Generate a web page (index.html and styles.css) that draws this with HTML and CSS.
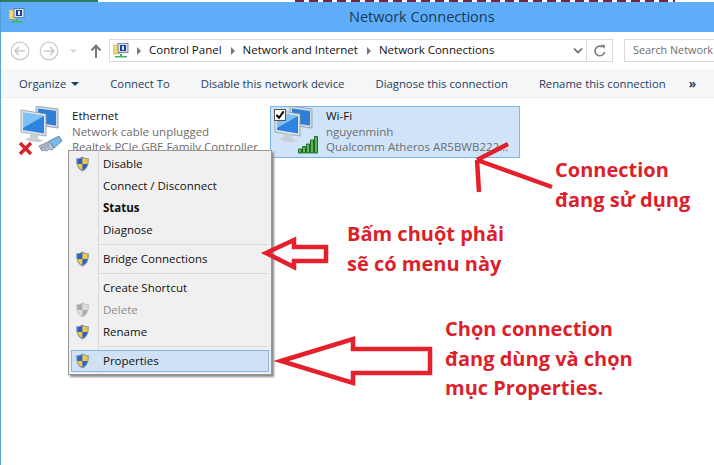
FILE: index.html
```html
<!DOCTYPE html>
<html lang="en">
<head>
    <meta charset="UTF-8">
    <title>Network Connections</title>
    <link rel="stylesheet" href="styles.css">
</head>
<body>
<svg class="defs" width="0" height="0">
    <symbol id="folderNet" viewBox="0 0 16 16">
        <path d="M0 2h6l1 1v8H0z" fill="#f3d774" stroke="#c9a94a" stroke-width=".6"/>
        <rect x="5" y="0.5" width="10" height="9" fill="#d8e4f2" stroke="#5c6f8c" stroke-width=".8"/>
        <rect x="7" y="2" width="6" height="6" fill="#1d3f9e"/>
        <rect x="9" y="3" width="2" height="4" fill="#e8eef8"/>
        <path d="M7 11h2v2h5v1.500H2V13h5z" fill="#3fb56a"/>
    </symbol>
    <symbol id="computers" viewBox="0 3 48 44">
        <path d="M18 3l22 3v19l-22-3z" fill="#cfd9e3" stroke="#8b98a6" stroke-width=".8"/>
        <path d="M20 5.500l18 2.500v14.500L20 20z" fill="#2f7fd6"/>
        <path d="M3 7l25 4v22L3 29z" fill="#dfe6ec" stroke="#8b98a6" stroke-width=".8"/>
        <path d="M5 9.500l21 3.500v17.500L5 27z" fill="#2c83e0"/>
        <path d="M5 9.500l21 3.500-21 12z" fill="#7fc0f5"/>
        <path d="M12 30l8 1.500v4l6 2.500c-6 2-14 1-19-2l5-1.500z" fill="#c9ced3"/>
    </symbol>
    <symbol id="shield" viewBox="0 0 16 18">
        <path d="M8 .5c2 1.500 4.500 2 7 2 .5 6.500-1 12-7 15-6-3-7.500-8.500-7-15 2.500 0 5-.5 7-2z" fill="#7d94ad"/>
        <path d="M8 2v7H2.400c-.2-2 0-3.500 0-5.500C4.500 3.500 6.500 3 8 2z" fill="#2f62c4"/>
        <path d="M8 2c1.500 1 3.500 1.500 5.600 1.500 0 2 .2 3.500 0 5.500H8z" fill="#f3c93a"/>
        <path d="M2.400 9H8v7C4.500 14.200 3 12 2.400 9z" fill="#f3c93a"/>
        <path d="M8 9h5.600C13 12 11.500 14.200 8 16z" fill="#2f62c4"/>
    </symbol>
    <symbol id="shieldOff" viewBox="0 0 16 18">
        <path d="M8 .5c2 1.500 4.500 2 7 2 .5 6.500-1 12-7 15-6-3-7.500-8.500-7-15 2.500 0 5-.5 7-2z" fill="#c4c4c4"/>
        <path d="M8 2v7H2.400c-.2-2 0-3.500 0-5.500C4.500 3.500 6.500 3 8 2zM8 9h5.600C13 12 11.500 14.200 8 16z" fill="#a9a9a9"/>
        <path d="M8 2c1.500 1 3.500 1.500 5.600 1.500 0 2 .2 3.500 0 5.500H8zM2.400 9H8v7C4.500 14.200 3 12 2.400 9z" fill="#dedede"/>
    </symbol>
</svg>

<div class="topStrip"><span class="stripGreen"></span><span class="stripRed"></span></div>
<div class="window">
    <div class="titleBar">
        <svg class="titleIcon" width="16" height="16"><use href="#folderNet"/></svg>
        <div class="titleText">Network Connections</div>
    </div>

    <div class="navRow">
        <svg class="navIcons" width="101" height="22" viewBox="0 0 101 22">
            <g fill="none" stroke="#c9c9c9" stroke-width="1.200">
                <circle cx="20" cy="11" r="8.800"/>
                <circle cx="49" cy="11" r="8.800"/>
                <path d="M25 11H15M19 7l-4 4 4 4M44 11h10M50 7l4 4-4 4" stroke-width="1.600"/>
            </g>
            <path d="M70 9.500h7l-3.500 3.500z" fill="#d4d4d4"/>
            <path d="M96 18V6M91.500 10.500L96 5.500l4.500 5" fill="none" stroke="#777" stroke-width="2"/>
        </svg>
        <div class="addressBox">
            <svg class="addrIcon" width="16" height="16"><use href="#folderNet"/></svg>
            <span class="crumbCaret"></span><span class="crumb">Control Panel</span>
            <span class="crumbCaret"></span><span class="crumb">Network and Internet</span>
            <span class="crumbCaret"></span><span class="crumb">Network Connections</span>
            <svg class="addrChevron" width="10" height="8" viewBox="0 0 10 8"><path d="M1 1.500l4 4 4-4" fill="none" stroke="#666" stroke-width="1.600"/></svg>
            <div class="refreshBtn">
                <svg width="14" height="14" viewBox="0 0 14 14"><path d="M11.500 8a4.800 4.800 0 1 1-2-5" fill="none" stroke="#7d7d7d" stroke-width="1.600"/><path d="M8 .5l4 .5-.5 4z" fill="#7d7d7d"/></svg>
            </div>
        </div>
        <div class="searchBox">Search Network</div>
    </div>

    <div class="commandBar">
        <span class="cmd">Organize<i class="cmdCaret"></i></span>
        <span class="cmd">Connect To</span>
        <span class="cmd">Disable this network device</span>
        <span class="cmd">Diagnose this connection</span>
        <span class="cmd">Rename this connection</span>
        <span class="cmd cmdMore">&raquo;</span>
    </div>

    <div class="content">
        <div class="connItem">
            <div class="connIcon">
                <svg width="48" height="44"><use href="#computers"/></svg>
                <svg class="connBadge" width="48" height="20" viewBox="0 0 48 20">
                    <path d="M2 7l11 11M13 7L2 18" stroke="#d9232a" stroke-width="3.400" fill="none"/>
                    <path d="M21 10l11-5 4 7-2 2-3-1-2 2-3-1-2 1z" fill="#b9c6d4" stroke="#6d7f93" stroke-width=".8"/>
                    <path d="M31 5l10-5 3 5-8 7z" fill="#7db6e8" stroke="#5a7ea6" stroke-width=".8"/>
                    <path d="M24 9v4M27 8v5M30 6v6" stroke="#6d7f93" stroke-width=".8" fill="none"/>
                </svg>
            </div>
            <div class="connText">
                <div class="connName">Ethernet</div>
                <div>Network cable unplugged</div>
                <div>Realtek PCIe GBE Family Controller</div>
            </div>
        </div>
        <div class="connItem connSelected">
            <div class="connIcon">
                <svg width="48" height="44"><use href="#computers"/></svg>
                <span class="checkBox">
                    <svg width="10" height="10" viewBox="0 0 11 11"><path d="M1.500 5.500l3 3 5-7" fill="none" stroke="#000" stroke-width="2.200"/></svg>
                </span>
                <svg class="connBadge" width="48" height="20" viewBox="0 0 48 20">
                    <path d="M26.500 13h3v4h-3zM30.500 10.500h3V17h-3zM34.500 8h3v9h-3zM38.500 4h3v13h-3zM42.500.5h3V17h-3z" fill="#5cb85c" stroke="#1f6b26" stroke-width="1"/>
                </svg>
            </div>
            <div class="connText">
                <div class="connName">Wi-Fi</div>
                <div>nguyenminh</div>
                <div>Qualcomm Atheros AR5BWB222...</div>
            </div>
        </div>
    </div>
</div>

<div class="contextMenu">
    <div class="menuItem"><svg class="menuShield" width="15" height="16"><use href="#shield"/></svg>Disable</div>
    <div class="menuItem">Connect / Disconnect</div>
    <div class="menuItem menuBold">Status</div>
    <div class="menuItem">Diagnose</div>
    <div class="menuSep"></div>
    <div class="menuItem"><svg class="menuShield" width="15" height="16"><use href="#shield"/></svg>Bridge Connections</div>
    <div class="menuSep"></div>
    <div class="menuItem">Create Shortcut</div>
    <div class="menuItem menuOff"><svg class="menuShield" width="15" height="16"><use href="#shieldOff"/></svg>Delete</div>
    <div class="menuItem"><svg class="menuShield" width="15" height="16"><use href="#shield"/></svg>Rename</div>
    <div class="menuSep"></div>
    <div class="menuItem menuHot"><svg class="menuShield" width="15" height="16"><use href="#shield"/></svg>Properties</div>
</div>

<svg class="arrows" width="714" height="465" viewBox="0 0 714 465">
    <g fill="none" stroke="#e4202c" stroke-width="4.500" stroke-linejoin="miter">
        <path d="M552 187L477 160M477 160L508 144M477 160L479 192"/>
        <path d="M266 253L294 240V247H326V261H294V267Z"/>
        <path d="M281 361L353 339V349H430V373H353V383Z"/>
    </g>
</svg>

<div class="note noteUsing">Connection<br>đang sử dụng</div>
<div class="note noteMenu">Bấm chuột phải<br>sẽ có menu này</div>
<div class="note noteChoose">Chọn connection<br>đang dùng và chọn<br>mục Properties.</div>
</body>
</html>
```

FILE: styles.css
```css
html, body {margin: 0; padding: 0; height: 100%; overflow: hidden; background: #fff;}
body {width: 714px; height: 465px; position: relative; font-family: "Open Sans", "Noto Sans", sans-serif; font-size: 11.5px;}
.defs {position: absolute;}

/* top of the picture behind the window */
.topStrip {height: 2px; display: flex; background: #fff;}
.stripGreen {width: 98px; background: #2c7d62;}
.stripRed {width: 380px; margin-left: 197px; background: repeating-linear-gradient(90deg, #7a2438 0 9px, #fff 9px 14px);}

/* window */
.window {height: 463px; border-left: 1px solid #5a9fdc; display: flex; flex-direction: column;}
.titleBar {height: 28px; padding: 0 0 2px 8px; background: #5fadf8; display: flex; align-items: center;}
.titleIcon {flex: none;}
.titleText {margin-left: 324px; font-size: 14.5px; color: #173a57;}

.navRow {height: 37px; background: #fff; display: flex; align-items: center; flex: none;}
.navIcons {flex: none; margin-right: 8px; margin-left: -1px;}
.addressBox {width: 502px; height: 21px; border: 1px solid #d9d9d9; display: flex; align-items: center; color: #111; flex: none;}
.addrIcon {margin-left: 3px; flex: none;}
.crumbCaret {width: 0; height: 0; border-left: 4px solid #777; border-top: 4px solid transparent; border-bottom: 4px solid transparent; margin: 0 8px 0 9px;}
.crumbCaret:first-of-type {margin-left: 8px;}
.crumb {white-space: nowrap; padding-bottom: 2px;}
.addrChevron {margin-left: auto; margin-right: 3px; flex: none;}
.refreshBtn {width: 25px; height: 21px; border-left: 1px solid #d9d9d9; display: flex; align-items: center; justify-content: center; flex: none;}
.searchBox {margin-left: 11px; height: 21px; line-height: 19px; padding-left: 8px; border: 1px solid #d9d9d9; border-right: none; color: #6d6d6d; font-size: 10.8px; white-space: nowrap; flex: 1; min-width: 0;}

.commandBar {height: 28px; background: #f5f6f7; border-bottom: 1px solid #eceef0; display: flex; align-items: center; padding-left: 18px; gap: 31px; color: #1f3d5f; font-size: 11.3px; flex: none; white-space: nowrap;}
.cmdCaret {display: inline-block; width: 0; height: 0; border-top: 4px solid #1f3d5f; border-left: 4px solid transparent; border-right: 4px solid transparent; margin-left: 5px; vertical-align: 2px;}
.cmdMore {font-weight: 700; margin-left: -8px; font-size: 12px;}

/* connection list */
.content {flex: 1; padding: 8px 0 0 15px; display: flex; gap: 4px; align-items: flex-start;}
.connItem {width: 250px; height: 52px; box-sizing: border-box; display: flex; border: 1px solid transparent; color: #6d6d6d; line-height: 15.500px;}
.connSelected {background: #cfe4f9; border-color: #7fb4e6;}
.connIcon {width: 48px; height: 48px; margin: -1px 6px 0 1px; position: relative; flex: none;}
.connBadge {position: absolute; left: 0; top: 30px;}
.checkBox {position: absolute; left: 2px; top: 3px; width: 12px; height: 12px; box-sizing: border-box; background: #fff; border: 1px solid #555; display: flex; align-items: center; justify-content: center;}
.connText {white-space: nowrap; overflow: hidden; padding-top: 1px; flex: 1;}
.connName {color: #111;}

/* context menu */
.contextMenu {position: absolute; left: 68px; top: 150px; width: 204px; box-sizing: border-box; background: #f0f0f0; border: 1px solid #979797; box-shadow: 2px 2px 2px #8a8a8a; padding: 2px;
    background-image: linear-gradient(#d9d9d9, #d9d9d9); background-size: 1px 100%; background-position: 29px 0; background-repeat: no-repeat;}
.menuItem {height: 22px; line-height: 19px; padding-left: 31px; position: relative; color: #111; white-space: nowrap; border: 1px solid transparent; box-sizing: border-box;}
.menuShield {position: absolute; left: 3px; top: 2px;}
.menuBold {font-weight: 700;}
.menuOff {color: #8d8d8d;}
.menuHot {background: #cfe2f5; border-color: #86b6e2;}
.menuSep {height: 1px; background: #d9d9d9; margin: 3px 1px 3px 28px;}

/* red notes and arrows drawn over the screenshot */
.arrows {position: absolute; left: 0; top: 0; pointer-events: none;}
.note {position: absolute; color: #dd1f2b; font-weight: 700; font-size: 20px; line-height: 29.500px; white-space: nowrap;}
.noteUsing {left: 555px; top: 155px;}
.noteMenu {left: 347px; top: 219px;}
.noteChoose {left: 445px; top: 314px;}
```
